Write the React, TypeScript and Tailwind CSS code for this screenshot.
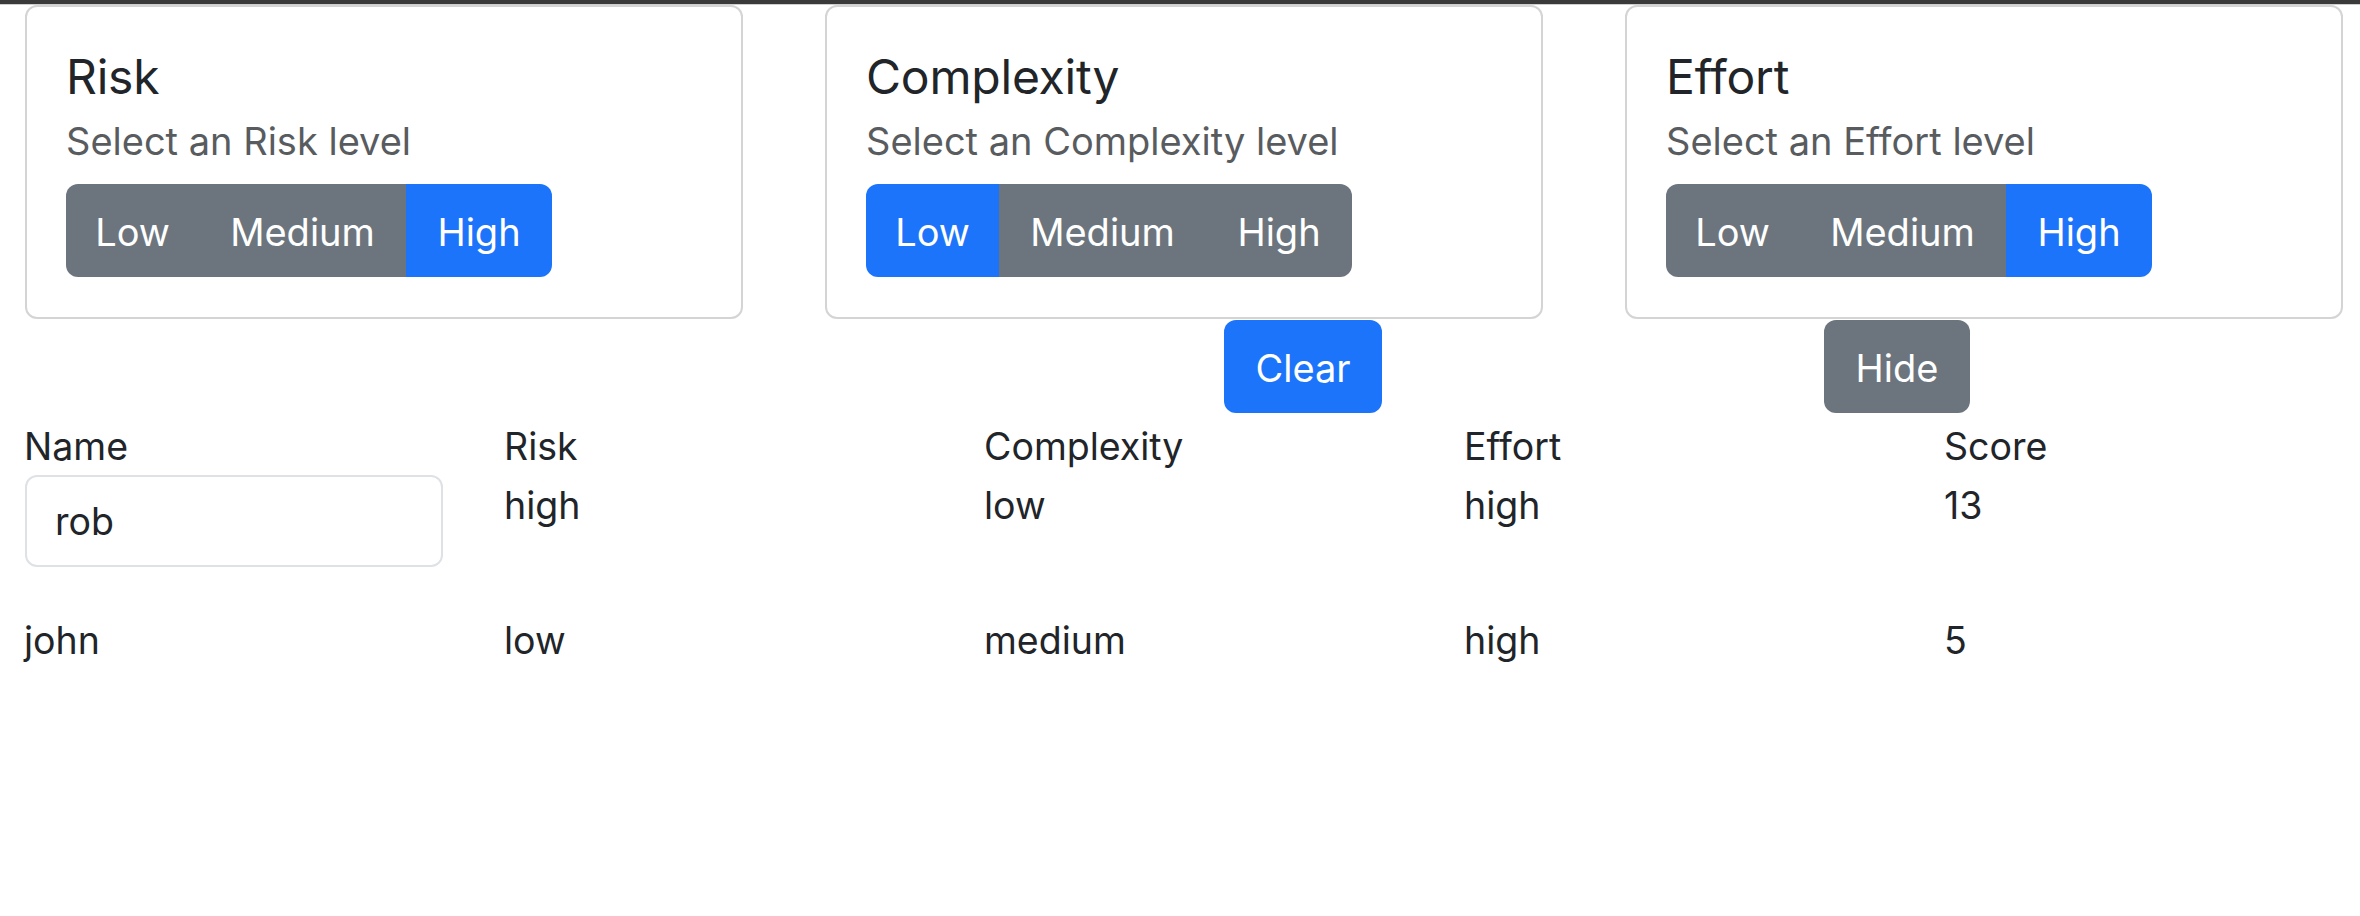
import React from "react";

type Level = "Low" | "Medium" | "High";

const btnWidths: Record<Level, string> = {
  Low: "w-[133px]",
  Medium: "w-[207px]",
  High: "w-[146px]",
};

function Card({ title, selected }: { title: string; selected: Level }) {
  const levels: Level[] = ["Low", "Medium", "High"];
  return (
    <div className="w-[718px] h-[314px] shrink-0 rounded-[12px] border-2 border-[#d4d4d4] bg-white pt-[41px] pb-[39px] pl-[39px] pr-[39px]">
      <div className="text-[48px] leading-[58px] text-[#212529] tracking-[-0.2px]">{title}</div>
      <div className="mt-[8px] text-[38px] leading-[54px] text-[#595c5f]">
        Select an {title} level
      </div>
      <div className="mt-[16px] flex h-[93px] w-fit overflow-hidden rounded-[12px]">
        {levels.map((l) => (
          <div
            key={l}
            className={
              (l === selected ? "bg-[#1c74fb] " : "bg-[#6c757d] ") +
              btnWidths[l] +
              " flex h-full items-center justify-center pt-[3px] text-[38px] text-white"
            }
          >
            {l}
          </div>
        ))}
      </div>
    </div>
  );
}

const cell = "w-[480px] shrink-0 text-[37.5px] leading-[54px] text-[#212529]";

export default function App() {
  return (
    <div
      className="w-[2360px] h-[916px] bg-white overflow-hidden"
      style={{ fontFamily: "Inter, 'Noto Sans', sans-serif" }}
    >
      <div className="h-[4px] bg-[#3a3a3a]" />
      <div className="h-[1px] bg-[#cfcfcf]" />
      <div className="flex gap-[82px] pl-[25px]">
        <Card title="Risk" selected="High" />
        <Card title="Complexity" selected="Low" />
        <Card title="Effort" selected="High" />
      </div>
      <div className="mt-[1px] flex h-[93px]">
        <div className="ml-[1224px] flex w-[158px] items-center justify-center rounded-[12px] bg-[#1c74fb] pt-[3px] text-[38px] text-white">
          Clear
        </div>
        <div className="ml-[442px] flex w-[146px] items-center justify-center rounded-[12px] bg-[#6c757d] pt-[3px] text-[38px] text-white">
          Hide
        </div>
      </div>
      <div className="mt-[7px] pl-[24px]">
        <div className="flex">
          <div className={cell}>Name</div>
          <div className={cell}>Risk</div>
          <div className={cell}>Complexity</div>
          <div className={cell}>Effort</div>
          <div className={cell}>Score</div>
        </div>
        <div className="mt-[1px] flex">
          <div className={cell}>
            <div className="ml-[1px] flex h-[92px] w-[418px] items-center rounded-[12px] border-2 border-[#dee2e6] pl-[28px] pt-[2px] text-[37.5px] leading-[54px]">
              rob
            </div>
          </div>
          <div className={cell + " pt-[4px]"}>high</div>
          <div className={cell + " pt-[4px]"}>low</div>
          <div className={cell + " pt-[4px]"}>high</div>
          <div className={cell + " pt-[4px]"}>13</div>
        </div>
        <div className="mt-[47px] flex">
          <div className={cell}>john</div>
          <div className={cell}>low</div>
          <div className={cell}>medium</div>
          <div className={cell}>high</div>
          <div className={cell}>5</div>
        </div>
      </div>
    </div>
  );
}
